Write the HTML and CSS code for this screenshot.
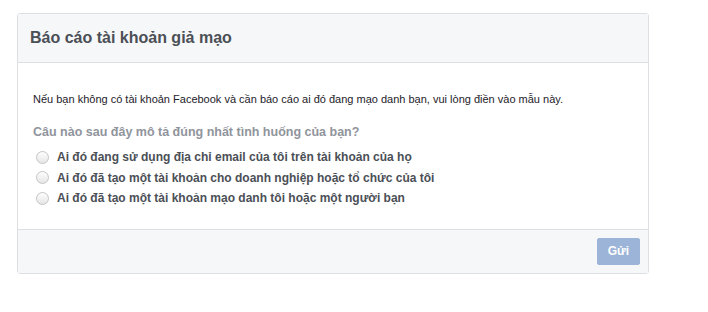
FILE: index.html
```html
<!DOCTYPE html>
<html lang="vi">
<head>
    <meta charset="UTF-8">
    <meta name="viewport" content="width=device-width, initial-scale=1.0">
    <title>Báo cáo tài khoản giả mạo</title>
    <link rel="stylesheet" href="styles.css">
</head>
<body>
    <div class="report-card">
        <div class="report-header">
            <h2>Báo cáo tài khoản giả mạo</h2>
        </div>

        <div class="report-body">
            <p class="intro">Nếu bạn không có tài khoản Facebook và cần báo cáo ai đó đang mạo danh bạn, vui lòng điền vào mẫu này.</p>

            <div class="question">Câu nào sau đây mô tả đúng nhất tình huống của bạn?</div>
            <label class="option">
                <input type="radio" name="situation" value="email">
                <span>Ai đó đang sử dụng địa chỉ email của tôi trên tài khoản của họ</span>
            </label>
            <label class="option">
                <input type="radio" name="situation" value="business">
                <span>Ai đó đã tạo một tài khoản cho doanh nghiệp hoặc tổ chức của tôi</span>
            </label>
            <label class="option">
                <input type="radio" name="situation" value="impersonate">
                <span>Ai đó đã tạo một tài khoản mạo danh tôi hoặc một người bạn</span>
            </label>
        </div>

        <div class="report-footer">
            <button class="send-btn" disabled>Gửi</button>
        </div>
    </div>
</body>
</html>
```

FILE: styles.css
```css
* {
    box-sizing: border-box;
    margin: 0;
    padding: 0;
}

body {
    font-family: 'Liberation Sans', Arial, sans-serif;
    background: #fff;
    padding: 13px 0 0 17px;
    color: #1d2129;
}

.report-card {
    width: 632px;
    border: 1px solid #dddfe2;
    border-radius: 3px;
    background: #fff;
}

.report-header {
    height: 49px;
    background: #f6f7f9;
    border-bottom: 1px solid #dddfe2;
    padding: 0 12px;
    display: flex;
    align-items: center;
}

.report-header h2 {
    font-size: 16px;
    font-weight: bold;
    color: #4b4f56;
}

.report-body {
    padding: 28px 15px 20px;
}

.intro {
    font-size: 11px;
    line-height: 16px;
    color: #1d2129;
}

.question {
    margin-top: 17px;
    margin-bottom: 7px;
    font-size: 12.5px;
    font-weight: bold;
    color: #90949c;
    line-height: 16px;
}

.option {
    display: flex;
    align-items: center;
    height: 20.5px;
    padding-left: 3px;
    font-size: 12px;
    font-weight: bold;
    color: #4b4f56;
}

.option input {
    appearance: none;
    width: 13px;
    height: 13px;
    margin: 0 8px 0 0;
    border: 1px solid #c5c5c5;
    border-radius: 50%;
    background: linear-gradient(#fdfdfd, #e6e6e6);
}

.report-footer {
    height: 44px;
    background: #f6f7f9;
    border-top: 1px solid #dddfe2;
    display: flex;
    justify-content: flex-end;
    align-items: center;
    padding-right: 8px;
}

.send-btn {
    font-family: inherit;
    font-size: 12px;
    font-weight: bold;
    color: #fff;
    background: #9cb4d8;
    border: 1px solid #9cb4d8;
    border-radius: 2px;
    height: 27px;
    padding: 0 10px;
}
```
